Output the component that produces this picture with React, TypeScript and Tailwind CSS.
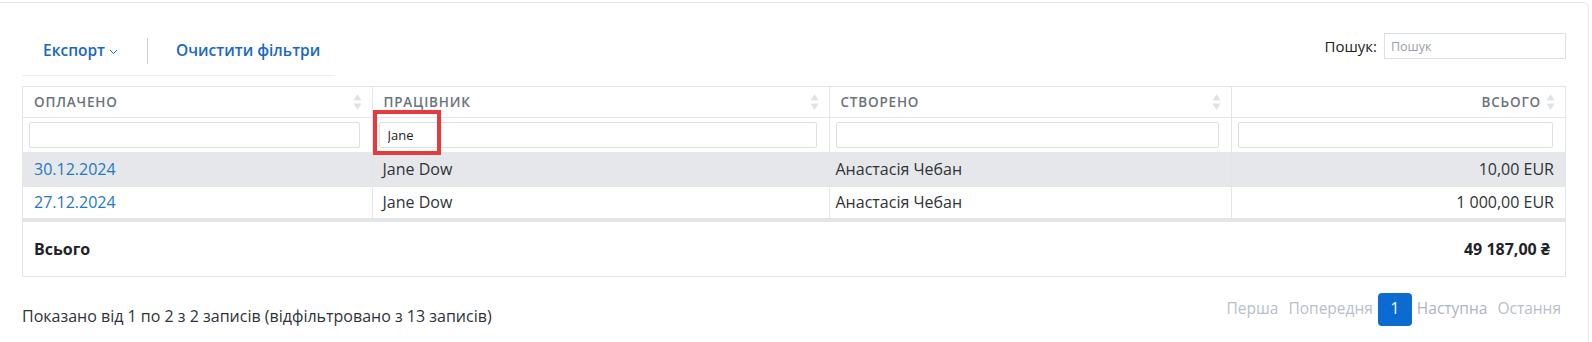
import React from 'react';

const font = { fontFamily: '"Open Sans", "Noto Sans", Arial, sans-serif' };

interface Row {
  paid: string;
  worker: string;
  createdBy: string;
  total: string;
}

const rows: Row[] = [
  { paid: '30.12.2024', worker: 'Jane Dow', createdBy: 'Анастасія Чебан', total: '10,00 EUR' },
  { paid: '27.12.2024', worker: 'Jane Dow', createdBy: 'Анастасія Чебан', total: '1 000,00 EUR' },
];

const SortIcon = () => (
  <svg width="9" height="18" viewBox="0 0 9 18" className="shrink-0">
    <path d="M4.5 1 L8.5 7.5 L0.5 7.5 Z" fill="#dfe2e6" />
    <path d="M4.5 17 L8.5 10.5 L0.5 10.5 Z" fill="#dfe2e6" />
  </svg>
);

const HeaderCell = ({ label, right }: { label: string; right?: boolean }) => (
  <th className="h-[30px] border-r border-[#e3e5e8] pl-[11px] pr-[10px] font-semibold last:border-r-0">
    <div className={`flex items-center gap-[5px] ${right ? 'justify-end' : 'justify-between'}`}>
      <span className="text-[13.5px] tracking-[0.06em] text-[#6c737c]">{label}</span>
      <SortIcon />
    </div>
  </th>
);

const FilterCell = ({ value }: { value?: string }) => (
  <td className="h-[35px] border-r border-[#e3e5e8] pl-[6px] pr-[12px] last:border-r-0">
    <input
      readOnly
      value={value ?? ''}
      className="block h-[26px] w-full rounded-[2px] border border-[#dcdfe3] bg-white px-[8px] text-[13px] text-[#222] outline-none"
      style={font}
    />
  </td>
);

export default function App() {
  return (
    <div className="h-[342px] w-[1592px] overflow-hidden bg-white text-[16px] text-[#2f3337]" style={font}>
      <div className="mt-[2px] mr-[3px] h-[400px] rounded-tr-[6px] border-t border-r border-[#e6e8eb] pl-[22px] pr-[22px]">
        {/* Toolbar */}
        <div className="flex items-start justify-between pt-[29px]">
          <div className="w-[313px] border-b border-[#eceef0] pb-[6px]">
            <div className="flex h-[37px] items-center">
              <button className="flex items-center gap-[4px] pl-[21px] text-[15.5px] font-semibold text-[#1769c2]">
                Експорт
                <svg width="9" height="6" viewBox="0 0 9 6" className="mt-[3px]">
                  <path d="M1 1 L4.5 4.5 L8 1" fill="none" stroke="#1769c2" strokeWidth="1" />
                </svg>
              </button>
              <div className="ml-[29px] h-[26px] w-px bg-[#c9ccd0]" />
              <button className="ml-[28px] text-[15.5px] font-semibold text-[#1769c2]">Очистити фільтри</button>
            </div>
          </div>
          <div className="flex items-center gap-[7px] pt-[1px]">
            <span className="text-[15px] text-[#222]">Пошук:</span>
            <input
              readOnly
              placeholder="Пошук"
              className="h-[26px] w-[182px] border border-[#dcdfe3] px-[6px] text-[12.5px] outline-none placeholder:text-[#9aa0a6]"
              style={font}
            />
          </div>
        </div>

        {/* Table */}
        <div className="relative mt-[10px] border border-[#e3e5e8]">
          <table className="w-full table-fixed border-collapse text-left">
            <colgroup>
              <col className="w-[349px]" />
              <col className="w-[457px]" />
              <col className="w-[402px]" />
              <col />
            </colgroup>
            <thead>
              <tr className="border-b border-[#e3e5e8]">
                <HeaderCell label="ОПЛАЧЕНО" />
                <HeaderCell label="ПРАЦІВНИК" />
                <HeaderCell label="СТВОРЕНО" />
                <HeaderCell label="ВСЬОГО" right />
              </tr>
              <tr>
                <FilterCell />
                <FilterCell value="Jane" />
                <FilterCell />
                <FilterCell />
              </tr>
            </thead>
            <tbody>
              {rows.map((r, i) => (
                <tr key={r.paid} className={`h-[34px] ${i === 0 ? 'bg-[#e5e7ea]' : 'border-t border-[#e3e5e8] bg-white'}`}>
                  <td className="border-r border-[#e3e5e8] px-[11px] text-[#2479c2]">{r.paid}</td>
                  <td className="border-r border-[#e3e5e8] px-[10px]">{r.worker}</td>
                  <td className="border-r border-[#e3e5e8] px-[6px]">{r.createdBy}</td>
                  <td className="px-[11px] text-right">{r.total}</td>
                </tr>
              ))}
            </tbody>
            <tfoot>
              <tr className="h-[56px] border-t-[4px] border-[#e3e5e8]">
                <td className="px-[11px] font-bold text-[#1f2328]">Всього</td>
                <td />
                <td />
                <td className="pr-[15px] text-right font-bold text-[#1f2328]">49 187,00 ₴</td>
              </tr>
            </tfoot>
          </table>
          {/* highlight overlay */}
          <div className="pointer-events-none absolute left-[350px] top-[23px] h-[45px] w-[68px] border-[4px] border-[#e8393d]" />
        </div>

        {/* Footer */}
        <div className="flex items-center justify-between pt-[13px]">
          <span className="pt-[14px] text-[16px] text-[#2f3337]">
            Показано від 1 по 2 з 2 записів (відфільтровано з 13 записів)
          </span>
          <div className="mr-[5px] flex items-center text-[15.5px] text-[#b6bfcb]">
            <span className="px-[5px]">Перша</span>
            <span className="px-[5px]">Попередня</span>
            <span className="flex h-[33px] w-[34px] items-center justify-center rounded-[4px] bg-[#0b6bd0] text-white">1</span>
            <span className="px-[5px] text-[#aab4c2]">Наступна</span>
            <span className="pl-[5px]">Остання</span>
          </div>
        </div>
      </div>
    </div>
  );
}
